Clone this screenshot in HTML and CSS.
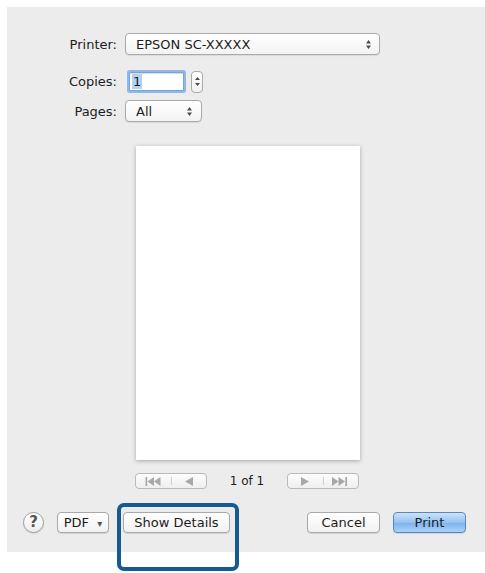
FILE: index.html
```html
<!DOCTYPE html>
<html lang="en">

<head>
    <meta charset="UTF-8" />
    <meta name="viewport" content="width=device-width, initial-scale=1" />
    <title>Print</title>
    <link rel="stylesheet" href="styles.css">
</head>

<body>
    <div class="dialog">
        <div class="form">
            <div class="row row-printer">
                <label>Printer:</label>
                <div class="popup popup-printer">
                    <span>EPSON SC-XXXXX</span>
                    <svg class="updown" width="7" height="11" viewBox="0 0 7 11"><path d="M3.5 1 L6 4.5 H1 Z M3.5 10 L6 6.5 H1 Z" fill="#4a4a4a"/></svg>
                </div>
            </div>
            <div class="row row-copies">
                <label>Copies:</label>
                <div class="field"><span class="sel">1</span></div>
                <div class="stepper">
                    <svg width="7" height="15" viewBox="0 0 7 15"><path d="M3.5 3 L6 6 H1 Z M3.5 12 L6 9 H1 Z" fill="#4a4a4a"/></svg>
                </div>
            </div>
            <div class="row row-pages">
                <label>Pages:</label>
                <div class="popup popup-pages">
                    <span>All</span>
                    <svg class="updown" width="7" height="11" viewBox="0 0 7 11"><path d="M3.5 1 L6 4.5 H1 Z M3.5 10 L6 6.5 H1 Z" fill="#4a4a4a"/></svg>
                </div>
            </div>
        </div>

        <div class="page"></div>

        <div class="nav">
            <div class="navbtn nav-left">
                <span class="seg">
                    <svg width="17" height="9" viewBox="0 0 17 9"><path d="M0.5 0 V9 H2.2 V0 Z M2.5 4.5 L9 0 V9 Z M9 4.5 L15.5 0 V9 Z" fill="#a8a8a8"/></svg>
                </span>
                <span class="seg">
                    <svg width="8" height="9" viewBox="0 0 8 9"><path d="M0 4.5 L8 0 V9 Z" fill="#a8a8a8"/></svg>
                </span>
            </div>
            <span class="pagecount">1 of 1</span>
            <div class="navbtn nav-right">
                <span class="seg">
                    <svg width="8" height="9" viewBox="0 0 8 9"><path d="M8 4.5 L0 0 V9 Z" fill="#a8a8a8"/></svg>
                </span>
                <span class="seg">
                    <svg width="17" height="9" viewBox="0 0 17 9"><path d="M6.5 4.5 L0 0 V9 Z M13 4.5 L6.5 0 V9 Z M13.3 0 V9 H15 V0 Z" fill="#a8a8a8"/></svg>
                </span>
            </div>
        </div>

        <div class="actions">
            <button class="help">?</button>
            <button class="btn btn-pdf">PDF <span class="caret">&#9662;</span></button>
            <button class="btn btn-details">Show Details</button>
            <span class="spacer"></span>
            <button class="btn btn-cancel">Cancel</button>
            <button class="btn btn-print">Print</button>
        </div>
    </div>

    <!-- callout around the Show Details button -->
    <div class="callout"></div>
</body>

</html>
```

FILE: styles.css
```css
body {
    margin: 0;
    background: #fff;
    font-family: "DejaVu Sans", sans-serif;
    font-size: 13px;
    color: #1c1c1c;
}

.dialog {
    margin: 7px 0 0 7px;
    width: 478px;
    height: 545px;
    background: #ececec;
    display: flex;
    flex-direction: column;
}

.form {
    padding-top: 26px;
    display: flex;
    flex-direction: column;
}

.row {
    display: flex;
    align-items: center;
}

.row label {
    width: 110px;
    margin-right: 8px;
    text-align: right;
}

.row-printer {
    height: 22px;
}

.row-copies {
    margin-top: 15px;
    height: 23px;
}

.row-pages {
    margin-top: 7px;
    height: 22px;
}

.popup {
    box-sizing: border-box;
    height: 22px;
    display: flex;
    align-items: center;
    justify-content: space-between;
    padding: 0 7px 0 10px;
    border: 1px solid #aaa;
    border-radius: 4px;
    background: linear-gradient(#fff, #f3f3f3);
    box-shadow: 0 1px 1px rgba(0, 0, 0, 0.08);
}

.popup-printer {
    width: 255px;
}

.popup-pages {
    width: 77px;
    padding-right: 8px;
}

.field {
    box-sizing: border-box;
    margin-left: 4px;
    width: 55px;
    height: 19px;
    border: 1px solid #7aa3d6;
    background: #fff;
    box-shadow: 0 0 0 2px #8fb7ea, inset 0 1px 1px rgba(0, 0, 0, 0.15);
    border-radius: 1px;
    display: flex;
    align-items: center;
    padding-left: 2px;
}

.field .sel {
    background: #b4d3f4;
    line-height: 15px;
    padding: 0 1px;
}

.stepper {
    box-sizing: border-box;
    margin-left: 7px;
    width: 12px;
    height: 22px;
    border: 1px solid #aaa;
    border-radius: 4px;
    background: linear-gradient(#fff, #f1f1f1);
    display: flex;
    align-items: center;
    justify-content: center;
}

.page {
    margin: 24px 0 0 129px;
    width: 224px;
    height: 314px;
    background: #fff;
    box-shadow: 0 1px 4px rgba(0, 0, 0, 0.3);
}

.nav {
    margin-top: 13px;
    padding-left: 128px;
    display: flex;
    align-items: center;
    height: 16px;
}

.navbtn {
    box-sizing: border-box;
    width: 72px;
    height: 16px;
    border: 1px solid #b9b9b9;
    border-radius: 4px;
    background: linear-gradient(#fdfdfd, #efefef);
    display: flex;
}

.navbtn .seg {
    flex: 1;
    display: flex;
    align-items: center;
    justify-content: center;
}

.navbtn .seg:first-child {
    border-right: 1px solid #d0d0d0;
    margin: 3px 0;
}

.pagecount {
    width: 80px;
    text-align: center;
    font-size: 12px;
}

.actions {
    margin-top: 23px;
    padding: 0 19px 0 16px;
    display: flex;
    align-items: center;
    height: 21px;
}

.help {
    box-sizing: border-box;
    width: 21px;
    height: 21px;
    padding: 0;
    border: 1px solid #9c9c9c;
    border-radius: 50%;
    background: linear-gradient(#fff, #eee);
    font-family: "DejaVu Sans", sans-serif;
    font-size: 15px;
    font-weight: bold;
    line-height: 19px;
    color: #555;
    box-shadow: 0 1px 1px rgba(0, 0, 0, 0.1);
}

.btn {
    box-sizing: border-box;
    height: 21px;
    padding: 0;
    border: 1px solid #a9a9a9;
    border-radius: 4px;
    background: linear-gradient(#fff, #f1f1f1);
    font-family: "DejaVu Sans", sans-serif;
    font-size: 13px;
    color: #1c1c1c;
    box-shadow: 0 1px 1px rgba(0, 0, 0, 0.1);
}

.btn-pdf {
    margin-left: 13px;
    width: 52px;
}

.btn-pdf .caret {
    font-size: 10px;
    color: #555;
    margin-left: 4px;
}

.btn-details {
    margin-left: 14px;
    width: 107px;
}

.spacer {
    flex: 1;
}

.btn-cancel {
    width: 73px;
}

.btn-print {
    margin-left: 13px;
    width: 73px;
    border-color: #5a86c0;
    background: linear-gradient(#cde3f9, #93c2f2 50%, #7ab3ef 51%, #a9d1f7);
}

.callout {
    position: absolute;
    left: 117px;
    top: 503px;
    width: 122px;
    height: 68px;
    box-sizing: border-box;
    border: 4px solid #155a92;
    border-radius: 7px;
}
```
